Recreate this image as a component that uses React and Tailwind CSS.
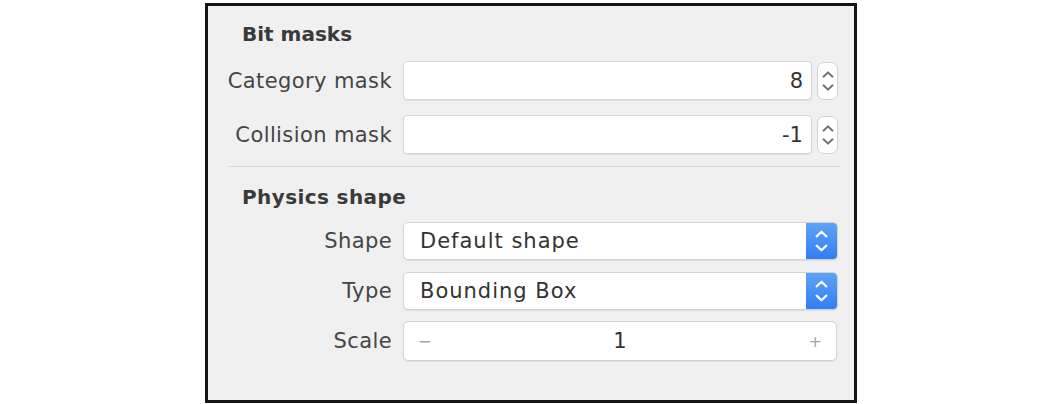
import React from "react";

const font = { fontFamily: '"DejaVu Sans", "Open Sans", sans-serif' };

const Chevrons = ({ color = "#707070", w = 14, h = 28, sw = 1.8 }) => (
  <svg width={w} height={h} viewBox="0 0 12 26" fill="none">
    <path d="M1.8 9 L6 5 L10.2 9" stroke={color} strokeWidth={sw} strokeLinecap="round" strokeLinejoin="round" />
    <path d="M1.8 17 L6 21 L10.2 17" stroke={color} strokeWidth={sw} strokeLinecap="round" strokeLinejoin="round" />
  </svg>
);

const Label = ({ children }) => (
  <div className="w-[184px] pt-[2px] text-right text-[21px] tracking-[0.4px] text-[#454545] shrink-0">{children}</div>
);

const NumberRow = ({ label, value }) => (
  <div className="flex items-center">
    <Label>{label}</Label>
    <div className="ml-[11px] w-[409px] h-[39px] bg-white border border-[#d6d6d6] rounded-[4px] shadow-[0_1px_1px_rgba(0,0,0,0.06)] flex items-center justify-end pr-[8px] pt-[2px] text-[21px] text-[#333]">
      {value}
    </div>
    <div className="ml-[5px] w-[21px] h-[38px] bg-white border border-[#d2d2d2] rounded-[7px] flex items-center justify-center">
      <Chevrons />
    </div>
  </div>
);

const PopupRow = ({ label, value }) => (
  <div className="flex items-center">
    <Label>{label}</Label>
    <div className="ml-[11px] w-[435px] h-[38px] flex rounded-[5px] border border-[#d4d4d4] bg-white shadow-[0_1px_1px_rgba(0,0,0,0.08)] overflow-hidden">
      <div className="flex-1 flex items-center pl-[16px] pt-[2px] text-[21px] tracking-[1px] text-[#333]">{value}</div>
      <div className="w-[31px] bg-gradient-to-b from-[#5ea2f8] to-[#2e7ff3] flex items-center justify-center">
        <Chevrons color="#ffffff" sw={1.9} h={30} w={15} />
      </div>
    </div>
  </div>
);

export default function App() {
  return (
    <div className="w-[1050px] h-[404px] bg-white overflow-hidden" style={font}>
      <div className="ml-[205px] mt-[3px] w-[652px] h-[400px] border-[3px] border-[#151515] bg-[#f0f0f0]">
        <div className="pl-[34px] pt-[16px] h-[40px] text-[20px] leading-[24px] font-bold text-[#3a3a3a]">Bit masks</div>
        <div className="mt-[15px] flex flex-col gap-[15px]">
          <NumberRow label="Category mask" value="8" />
          <NumberRow label="Collision mask" value="-1" />
        </div>
        <div className="mt-[12px] ml-[20px] w-[612px] h-[1px] bg-[#d9d9d9]" />
        <div className="mt-[18px] pl-[34px] text-[20px] leading-[24px] font-bold tracking-[0.4px] text-[#3a3a3a]">Physics shape</div>
        <div className="mt-[13px] flex flex-col gap-[12px]">
          <PopupRow label="Shape" value="Default shape" />
          <PopupRow label="Type" value="Bounding Box" />
          <div className="flex items-center -mt-[1px]">
            <Label>Scale</Label>
            <div className="ml-[11px] w-[434px] h-[40px] bg-white border border-[#d2d2d2] rounded-[5px] shadow-[0_1px_1px_rgba(0,0,0,0.06)] flex items-center px-[14px] pt-[2px]">
              <span className="text-[16px] text-[#a8a8a8]">−</span>
              <span className="flex-1 text-center text-[21px] text-[#333]">1</span>
              <span className="text-[16px] text-[#a8a8a8]">+</span>
            </div>
          </div>
        </div>
      </div>
    </div>
  );
}
